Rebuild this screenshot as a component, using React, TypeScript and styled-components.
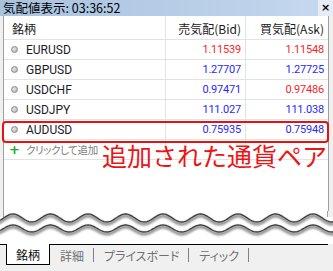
import styled, { createGlobalStyle } from "styled-components";

const GlobalStyle = createGlobalStyle`
  html, body {
    margin: 0;
    padding: 0;
    background: #f0f0f0;
  }
  body {
    font-family: "Noto Sans CJK JP", "Noto Sans", sans-serif;
    font-feature-settings: "palt";
  }
`;

const Window = styled.div`
  position: relative;
  width: 333px;
  height: 271px;
  overflow: hidden;
  background: #f0f0f0;
  display: flex;
  flex-direction: column;
`;

const TitleBar = styled.div`
  height: 16px;
  display: flex;
  align-items: center;
  padding-left: 3px;
  background: linear-gradient(to right, #a8c2de, #b8cfe8 60%, #c6d9ee);
  color: #000;
  font-size: 12.5px;
  line-height: 16px;
  white-space: nowrap;
`;

const CloseBox = styled.div`
  margin-left: auto;
  width: 15px;
  height: 16px;
  display: flex;
  align-items: center;
  justify-content: center;
  background: #e6edf5;
  font-family: "DejaVu Sans", sans-serif;
  font-weight: bold;
  font-size: 11px;
`;

const Panel = styled.div`
  margin-left: 3px;
  width: 324px;
  height: 195px;
  background: #fff;
  border-left: 1px solid #a0a0a0;
  border-right: 1px solid #a0a0a0;
  display: flex;
  flex-direction: column;
`;

const Row = styled.div<{ $head?: boolean }>`
  display: grid;
  grid-template-columns: 162px 80px 82px;
  height: ${(p) => (p.$head ? 24 : 20)}px;
  border-bottom: 1px solid #e3e3e3;
  box-sizing: border-box;
`;

const Cell = styled.div<{ $right?: boolean; $divider?: boolean }>`
  display: flex;
  align-items: center;
  justify-content: ${(p) => (p.$right ? "flex-end" : "flex-start")};
  padding: ${(p) => (p.$right ? "0 4px 0 0" : "0 0 0 8px")};
  border-right: ${(p) => (p.$divider ? "1px solid #e3e3e3" : "none")};
  gap: 8px;
`;

const HeadText = styled.span`
  font-size: 12px;
  color: #1a1a1a;
  padding-top: 1px;
`;

const Dot = styled.span`
  width: 5px;
  height: 5px;
  border-radius: 50%;
  background: radial-gradient(circle at 40% 40%, #e8e8e8, #a8a8a8);
  border: 1px solid #8c8c8c;
  margin-left: -1px;
`;

const Symbol = styled.span`
  font-family: "Roboto", "Noto Sans", sans-serif;
  font-size: 12px;
  color: #1c1c28;
`;

const Price = styled.span<{ $up?: boolean }>`
  font-family: "Roboto", "Noto Sans", sans-serif;
  font-size: 11px;
  letter-spacing: -0.2px;
  color: ${(p) => (p.$up ? "#2828ff" : "#ff2424")};
`;

const AddText = styled.span`
  font-size: 10.5px;
  letter-spacing: -0.4px;
  color: #808080;
`;

const Plus = styled.span`
  font-family: "DejaVu Sans", sans-serif;
  font-weight: bold;
  font-size: 13px;
  color: #22a822;
  width: 7px;
  margin-left: -1px;
  display: flex;
  justify-content: center;
`;

const TabStrip = styled.div`
  flex: 1;
  display: flex;
  align-items: flex-start;
  margin: 0 5px 0 0;
  padding-left: 6px;
  border-top: 1px solid #000;
  background: #f0f0f0;
`;

const ActiveTab = styled.div`
  margin-top: -1px;
  width: 42px;
  height: 20px;
  background: #fff;
  border: 1px solid #000;
  border-top: none;
  display: flex;
  align-items: center;
  justify-content: center;
  font-size: 12px;
  color: #111;
`;

const Tab = styled.div`
  height: 20px;
  padding: 0 9px 0 10px;
  display: flex;
  align-items: center;
  font-size: 12px;
  color: #707070;
`;

const TabSep = styled.div`
  width: 1px;
  height: 14px;
  margin-top: 3px;
  background: #808080;
`;

const Highlight = styled.div`
  position: absolute;
  left: 2px;
  top: 121px;
  width: 323px;
  height: 18px;
  border: 2px solid #ea1010;
  border-radius: 4px;
`;

const Note = styled.div`
  position: absolute;
  left: 102px;
  top: 143px;
  font-size: 25px;
  line-height: 1;
  color: #ec1515;
  white-space: nowrap;
  font-feature-settings: normal;
`;

type Quote = { sym: string; bid: string; ask: string; bidUp: boolean; askUp: boolean };

const quotes: Quote[] = [
  { sym: "EURUSD", bid: "1.11539", ask: "1.11548", bidUp: false, askUp: false },
  { sym: "GBPUSD", bid: "1.27707", ask: "1.27725", bidUp: true, askUp: true },
  { sym: "USDCHF", bid: "0.97471", ask: "0.97486", bidUp: true, askUp: false },
  { sym: "USDJPY", bid: "111.027", ask: "111.038", bidUp: true, askUp: true },
  { sym: "AUDUSD", bid: "0.75935", ask: "0.75948", bidUp: true, askUp: true },
];

function wavePath(center: number, amp: number) {
  const pts: string[] = [];
  for (let x = -4; x <= 338; x += 1) {
    const y = center - amp * Math.cos(((x - 13) / 37.5) * Math.PI * 2);
    pts.push(`${x},${y.toFixed(2)}`);
  }
  return "M" + pts.join(" L");
}

function WaveBreak() {
  const w1 = wavePath(7, 4);
  const w2 = wavePath(17.5, 3.5);
  return (
    <svg width="333" height="33" viewBox="0 0 333 33" style={{ display: "block" }}>
      <defs>
        <filter id="soft" x="-5%" y="-50%" width="110%" height="200%">
          <feGaussianBlur stdDeviation="1.1" />
        </filter>
      </defs>
      <rect x="0" y="0" width="333" height="33" fill="#fff" />
      <rect x="0" y="0" width="3" height="6" fill="#f0f0f0" />
      <rect x="328" y="0" width="5" height="6" fill="#f0f0f0" />
      <line x1="3.5" y1="0" x2="3.5" y2="6" stroke="#a0a0a0" />
      <line x1="327.5" y1="0" x2="327.5" y2="6" stroke="#a0a0a0" />
      <path d={w1} fill="none" stroke="#8a8a8a" strokeWidth="3" filter="url(#soft)" transform="translate(0 2)" />
      <path d={w1} fill="none" stroke="#3c3c3c" strokeWidth="1.3" />
      <path d={w2} fill="none" stroke="#8a8a8a" strokeWidth="3" filter="url(#soft)" transform="translate(0 2)" />
      <path d={w2} fill="none" stroke="#3c3c3c" strokeWidth="1.3" />
    </svg>
  );
}

export default function App() {
  return (
    <>
      <GlobalStyle />
      <Window>
        <TitleBar>
          気配値表示: 03:36:52
          <CloseBox>×</CloseBox>
        </TitleBar>
        <Panel>
          <Row $head>
            <Cell $divider>
              <HeadText>銘柄</HeadText>
            </Cell>
            <Cell $right $divider>
              <HeadText>売気配(Bid)</HeadText>
            </Cell>
            <Cell $right>
              <HeadText>買気配(Ask)</HeadText>
            </Cell>
          </Row>
          {quotes.map((q) => (
            <Row key={q.sym}>
              <Cell $divider>
                <Dot />
                <Symbol>{q.sym}</Symbol>
              </Cell>
              <Cell $right $divider>
                <Price $up={q.bidUp}>{q.bid}</Price>
              </Cell>
              <Cell $right>
                <Price $up={q.askUp}>{q.ask}</Price>
              </Cell>
            </Row>
          ))}
          <Row>
            <Cell $divider>
              <Plus>+</Plus>
              <AddText>クリックして追加</AddText>
            </Cell>
            <Cell $divider />
            <Cell />
          </Row>
        </Panel>
        <WaveBreak />
        <TabStrip>
          <ActiveTab>銘柄</ActiveTab>
          <Tab>詳細</Tab>
          <TabSep />
          <Tab>プライスボード</Tab>
          <TabSep />
          <Tab>ティック</Tab>
          <TabSep />
        </TabStrip>
        <Highlight />
        <Note>追加された通貨ペア</Note>
      </Window>
    </>
  );
}
